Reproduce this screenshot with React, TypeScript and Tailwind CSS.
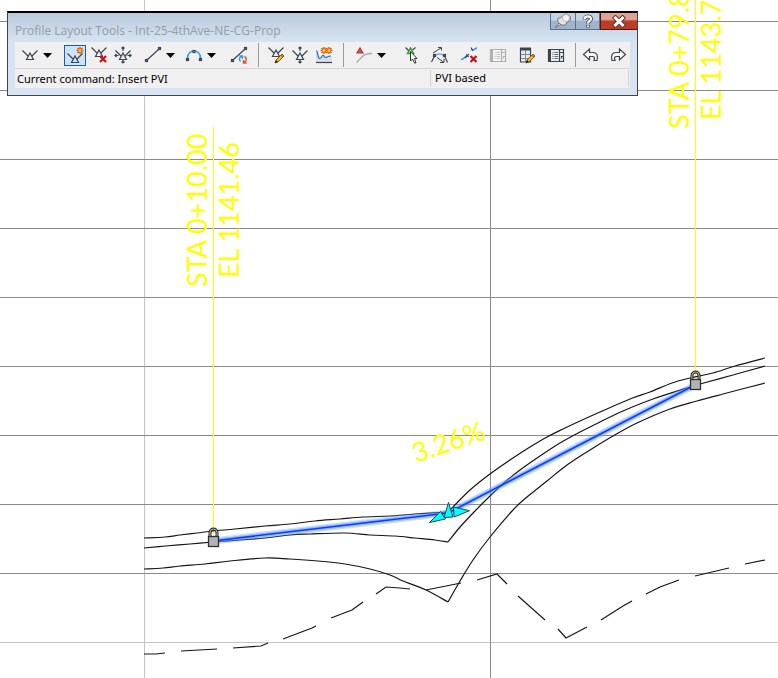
import React from 'react';

type Point = [number, number];

/* ---------- profile drawing ---------- */

const gridRows = [21, 90, 159, 228, 297, 366, 435, 504, 573];

const topLeft: Point[] = [[144, 538], [165, 537], [180, 535], [197, 533], [213, 531], [235, 529], [265, 526], [290, 524], [315, 521], [340, 519], [363, 517], [390, 516], [415, 514], [448, 512]];
const topRight: Point[] = [[448, 512], [454, 506], [470, 490], [490, 474], [513, 458], [530, 447], [547, 437], [563, 429], [580, 421], [600, 412], [630, 399], [650, 392], [672, 383], [690, 378], [713, 373], [735, 366], [765, 358]];
const middleLeft: Point[] = [[144, 548], [165, 546], [190, 544], [213, 542], [240, 540], [265, 538], [290, 535], [310, 534], [345, 533], [370, 535], [395, 536], [415, 538], [435, 540], [448, 542]];
const middleRight: Point[] = [[448, 542], [460, 527], [475, 511], [490, 496], [505, 482], [520, 470], [540, 456], [560, 443], [580, 432], [600, 422], [623, 411], [653, 399], [690, 387], [700, 384], [733, 375], [765, 366]];
const bottomLeft: Point[] = [[144, 569], [163, 568], [180, 566], [205, 564], [230, 561], [265, 558], [290, 559], [318, 561], [345, 564], [370, 569], [390, 575], [403, 581], [426, 590], [448, 602]];
const bottomRight: Point[] = [[448, 602], [460, 581], [473, 560], [490, 537], [513, 510], [527, 497], [547, 481], [567, 465], [590, 450], [613, 436], [637, 423], [670, 409], [697, 401], [723, 394], [765, 383]];

const groundDashes: Point[][] = [
  [[144, 654], [156, 654], [165, 653]],
  [[181, 651], [217, 649]],
  [[233, 648], [261, 646], [268, 643]],
  [[283, 639], [312, 628], [316, 626]],
  [[331, 618], [352, 610], [363, 602]],
  [[376, 594], [386, 587], [400, 588], [410, 589]],
  [[426, 590], [461, 583]],
  [[477, 580], [497, 574], [507, 584]],
  [[518, 596], [545, 620]],
  [[558, 629], [566, 638], [587, 627]],
  [[601, 620], [623, 606], [632, 601]],
  [[646, 594], [660, 587], [679, 580]],
  [[695, 576], [729, 568]],
  [[745, 564], [765, 560]],
];

const toPoints = (list: Point[]) => list.map((p) => p.join(',')).join(' ');

/* Catmull-Rom spline through the surveyed points */
function toSpline(list: Point[]) {
  let d = `M${list[0][0]} ${list[0][1]}`;
  for (let i = 0; i < list.length - 1; i++) {
    const before = list[Math.max(i - 1, 0)];
    const from = list[i];
    const to = list[i + 1];
    const after = list[Math.min(i + 2, list.length - 1)];
    d += `C${from[0] + (to[0] - before[0]) / 6} ${from[1] + (to[1] - before[1]) / 6} ${to[0] - (after[0] - from[0]) / 6} ${to[1] - (after[1] - from[1]) / 6} ${to[0]} ${to[1]}`;
  }
  return d;
}

function Lock({ x, y }: { x: number; y: number }) {
  return (
    <g transform={`translate(${x} ${y})`}>
      <path d="M-3 0V-3.500a3.500 3.500 0 0 1 7 0V0" fill="none" stroke="#2e2e2e" strokeWidth="3" />
      <path d="M-3 0V-3.500a3.500 3.500 0 0 1 7 0V0" fill="none" stroke="#b4b4b4" strokeWidth="1" />
      <rect x="-4.500" y="0.500" width="10" height="10" fill="#b2b2b2" stroke="#2e2e2e" strokeWidth="1.300" />
    </g>
  );
}

function StationLabel({ x, y, text }: { x: number; y: number; text: string }) {
  return (
    <text transform={`translate(${x} ${y}) rotate(-90)`} className="fill-[#ffff00] font-['Lato',sans-serif] text-[27px]">
      {text}
    </text>
  );
}

function ProfileView() {
  return (
    <svg className="block h-screen w-full" role="img" aria-label="Profile view">
      <g shapeRendering="crispEdges">
        <path d="M144.500 0V2000" stroke="#c4c4c4" />
        <line x1="0" x2="100%" y1="642.5" y2="642.5" stroke="#c4c4c4" />
        {gridRows.map((y) => (
          <line key={y} x1="0" x2="100%" y1={y + 0.5} y2={y + 0.5} stroke="#8a8a8a" />
        ))}
        <path d="M490.500 0V2000" stroke="#8a8a8a" />
        <path d="M213.500 127V534M695.500 0V377" stroke="#ffff00" />
      </g>
      <g fill="none" stroke="#161616" strokeWidth="1.200">
        {[topLeft, topRight, middleLeft, middleRight, bottomLeft, bottomRight].map((line, i) => (
          <path key={i} d={toSpline(line)} />
        ))}
        {groundDashes.map((line, i) => (
          <polyline key={i} points={toPoints(line)} />
        ))}
      </g>
      <g fill="none" strokeLinejoin="round">
        <path d="M213 541L448 513L695 385" stroke="#5a94ff" strokeOpacity=".3" strokeWidth="7" />
        <path d="M213 541L448 513L695 385" stroke="#5a94ff" strokeOpacity=".5" strokeWidth="4" />
        <path d="M213 541L448 513L695 385" stroke="#0a3cff" strokeWidth="1.500" />
      </g>
      <g fill="#00ffff" stroke="#1f4a4a" strokeWidth="1">
        <path d="M429.500 522.500L440.500 511.500L445.500 519Z" />
        <path d="M453.500 507L469.500 510.700L454 517Z" />
        <path d="M448.500 502.500L453 517L444 517.500Z" />
      </g>
      <Lock x={213} y={536} />
      <Lock x={695} y={379} />
      <StationLabel x={207} y={287} text="STA 0+10.00" />
      <StationLabel x={239} y={278} text="EL 1141.46" />
      <StationLabel x={689} y={129} text="STA 0+79.83" />
      <StationLabel x={721} y={120} text="EL 1143.74" />
      <text transform="translate(416 463) rotate(-19)" className="fill-[#ffff00] font-['Lato',sans-serif] text-[27px]">3.26%</text>
    </svg>
  );
}

/* ---------- toolbar icons ---------- */

const ink = '#3b444d';

function Glyph({ children }: { children: React.ReactNode }) {
  return (
    <svg width="18" height="18" viewBox="0 0 18 18" fill="none" stroke={ink} strokeWidth="1.200" aria-hidden="true">
      {children}
    </svg>
  );
}

const Tangents = ({ y = 0 }: { y?: number }) => (
  <g transform={`translate(0 ${y})`}>
    <path d="M1.500 4.500L7 10M16.500 4.500L11 10" />
    <path d="M9 7L5.500 13.500H12.500Z" />
  </g>
);

const RedCross = ({ x, y }: { x: number; y: number }) => (
  <path transform={`translate(${x} ${y})`} d="M0 0L6 6M6 0L0 6" stroke="#c80f14" strokeWidth="2.200" />
);

const Spark = ({ x, y }: { x: number; y: number }) => (
  <g transform={`translate(${x} ${y})`}>
    <path d="M0-3.500V3.500M-3.500 0H3.500M-2.500-2.500L2.500 2.500M2.500-2.500L-2.500 2.500" stroke="#e8590c" strokeWidth="1.400" />
    <circle r="1.600" fill="#ffe94d" stroke="#ec7a12" strokeWidth=".8" />
  </g>
);

const Pencil = ({ x, y }: { x: number; y: number }) => (
  <g transform={`translate(${x} ${y})`}>
    <path d="M0 8L1 5L7 -1L9 1L3 7Z" fill="#fbb829" stroke="#7a4b14" strokeWidth=".9" />
    <path d="M0 8L1 5L3 7Z" fill="#222" stroke="none" />
    <path d="M6 0L8 2" stroke="#b5651d" />
  </g>
);

const Node = ({ x, y }: { x: number; y: number }) => (
  <rect x={x} y={y} width="2" height="2" fill="#fff" strokeWidth="1.200" />
);

const Line = () => (
  <>
    <path d="M3 14L14.500 3.500" />
    <Node x={1.5} y={13.5} />
    <Node x={14.5} y={1.5} />
  </>
);

const Panel = ({ tone, fill }: { tone: string; fill: string }) => (
  <g stroke={tone}>
    <path d="M1.500 3.500H16.500V15.500H1.500Z" fill={fill} />
    <path d="M3 3.500V15.500" strokeWidth="2" />
    <path d="M12.500 3.500V15.500M14.500 12.500V10.500H16.500M13 6.500H16" />
    <path d="M5.500 6.500H6.500M7.500 6.500H11M5.500 8.500H6.500M7.500 8.500H11M5.500 10.500H6.500M7.500 10.500H11M5.500 12.500H6.500M7.500 12.500H11" strokeWidth="1" strokeOpacity=".75" />
  </g>
);

const icons = {
  tangents: <Tangents />,
  insertPvi: (
    <>
      <Tangents y={3} />
      <Spark x={14} y={4.5} />
    </>
  ),
  deletePvi: (
    <>
      <Tangents y={-3} />
      <RedCross x={10} y={10} />
    </>
  ),
  movePvi: (
    <>
      <Tangents />
      <path d="M9 1V5M9 14V17M1 9.500H4.500M13.500 9.500H17M7.500 2.500L9 1L10.500 2.500M7.500 15.500L9 17L10.500 15.500M2.500 8L1 9.500L2.500 11M15.500 8L17 9.500L15.500 11" />
    </>
  ),
  line: <Line />,
  curve: (
    <>
      <path d="M2.500 12C3 2.500 15 2.500 15.500 12" stroke="#2a9df0" strokeWidth="1.500" />
      <Node x={1.5} y={12.5} />
      <Node x={14.5} y={12.5} />
      <Node x={8} y={4.5} />
    </>
  ),
  convert: (
    <>
      <Line />
      <path d="M14.500 10.500C17 12 17 15 14 16.500M13.500 14V17H16.500" stroke="#f4511e" strokeWidth="1.500" />
      <path d="M10.500 15.500C8.500 13.500 9.500 10.500 12 10.500M12.500 13V10H9.500" stroke="#2a9df0" strokeWidth="1.500" />
    </>
  ),
  editPvi: (
    <>
      <Tangents y={-3} />
      <Pencil x={8} y={9} />
    </>
  ),
  raisePvi: (
    <>
      <Tangents />
      <path d="M9 1V5M9 14V17M7.500 2.500L9 1L10.500 2.500M7.500 15.500L9 17L10.500 15.500" />
    </>
  ),
  copyProfile: (
    <>
      <path d="M1 5L5 13L8 9L10 12L13 9L17 11V16H1Z" fill="#d8dfe9" stroke="none" />
      <path d="M1.500 4.500C3 7 3 13 5 12.500S7 8.500 8.500 9.500S9.500 12 11 11.500S13 10 16 10" stroke="#2673c9" />
      <path d="M1 16.500H17" />
      <Spark x={9} y={4.5} />
      <Spark x={14} y={4.5} />
    </>
  ),
  pviCurve: (
    <>
      <path d="M1.500 16.500L8 10C10 8 12 7.500 17 7.500" stroke="#a8a8a8" strokeWidth="1.300" />
      <path d="M5 2L8 7H2Z" fill="#c8605c" stroke="#a63a38" />
    </>
  ),
  selectPvi: (
    <>
      <path d="M3.500 1.500L7 5M13.500 1.500L10.500 4" />
      <path d="M8.500 2L5.500 7.500H11.500Z" fill="#dff0dc" stroke="#2e9b2e" strokeWidth="1.500" />
      <path d="M8.500 5.500V15L10.500 13L12.500 17H14L12.500 12.500H15Z" fill="#fff" stroke="#333" strokeWidth="1" />
    </>
  ),
  selectEntity: (
    <>
      <path d="M2 7L10 2M7 1.500H10.500V4.500M6 11.500L12.500 16M9 16.500H13V13" strokeWidth="1" />
      <path d="M0.500 16L3.500 10M13.500 10L16.500 16.500" />
      <path d="M4 9.500C7 7.500 10 7.500 13 9.500" stroke="#68a9ee" strokeWidth="1.400" />
      <Node x={2.5} y={8.5} />
      <Node x={12.5} y={8.5} />
    </>
  ),
  deleteEntity: (
    <>
      <path d="M1 13.500C3 13.500 4 12 6 10.500M11.500 3.500C13 5 14.500 3.500 17 1.500" stroke="#2a9df0" strokeWidth="1.600" />
      <path d="M6 8.500L8.500 11M5 12L9 8" />
      <path d="M11 1.500L13 5" />
      <RedCross x={10.5} y={10} />
    </>
  ),
  panelOff: <Panel tone="#b0b0b0" fill="#f4f4f4" />,
  gridEdit: (
    <>
      <path d="M2.500 2.500H12.500V16H2.500Z" fill="#e9edf2" />
      <path d="M2 3H13" strokeWidth="3" />
      <path d="M2.500 8.500H12.500M2.500 12.500H12.500M7.500 4V16" stroke="#7b8794" strokeWidth="1" />
      <Pencil x={8} y={9} />
    </>
  ),
  panel: <Panel tone="#3b444d" fill="#e9edf2" />,
  undo: <path d="M1.500 8.500L7.500 3V6.500H11C14.500 6.500 16.500 9 15 14.500H12C13 12 12.500 10.500 10.500 10.500H7.500V14Z" fill="#fafafa" />,
  redo: <path d="M16.500 8.500L10.500 3V6.500H7C3.500 6.500 1.500 9 3 14.500H6C5 12 5.500 10.500 7.500 10.500H10.500V14Z" fill="#fafafa" />,
};

type IconName = keyof typeof icons;

function Tool({ icon, label, active, menu, disabled }: { icon: IconName; label: string; active?: boolean; menu?: boolean; disabled?: boolean }) {
  return (
    <button
      type="button"
      aria-label={label}
      aria-pressed={active}
      disabled={disabled}
      className={`flex h-[21px] shrink-0 items-center ${menu ? 'w-9 justify-between pl-0.5 pr-[3px]' : 'w-[22px] justify-center'} ${active ? 'border border-[#1c5f9f] bg-[#cce4f7]' : ''}`}
    >
      <Glyph>{icons[icon]}</Glyph>
      {menu && (
        <svg width="9" height="5" viewBox="0 0 9 5" aria-hidden="true">
          <path d="M0 0H9L4.500 5Z" fill="#000" />
        </svg>
      )}
    </button>
  );
}

const Separator = () => <span className="ml-2 h-6 w-px shrink-0 bg-[#9a9a9a]" />;

/* ---------- floating toolbar window ---------- */

function LayoutToolsWindow() {
  return (
    <section className="absolute left-[7px] top-[11px] w-[631px] border border-t-2 border-[#3f444b] border-t-black bg-[#d7e3f1] pb-[7px] pl-[7px] pr-[7px] font-['Noto_Sans','Open_Sans',sans-serif]">
      <header className="-ml-[7px] -mr-[7px] flex h-[29px] items-start justify-between bg-linear-to-b from-[#b9cbdd] to-[#d7e3f1] pl-[7px]">
        <h1 className="pt-[10px] font-['Open_Sans',sans-serif] text-[12px] leading-4 text-[#959ca4]">Profile Layout Tools - Int-25-4thAve-NE-CG-Prop</h1>
        <div className="flex h-[17px]">
          <button type="button" aria-label="Pin" className="flex w-[26px] items-center justify-center border border-t-0 border-[#5d7187] bg-linear-to-b from-[#c3d3e4] from-45% to-[#9db4cc] to-50%">
            <svg width="18" height="16" viewBox="0 0 18 16" className="shrink-0" aria-hidden="true">
              <path d="M1.500 14.500L5.500 9L7.500 11Z" fill="#eee" stroke="#6b747e" />
              <path d="M4 5.500C2.500 9 7.500 14 12 11.500L12.500 9.500L16 7.500C18 3.500 14 0 10 1.500L7 4.500Z" fill="#e6e6e6" stroke="#6b747e" />
              <circle cx="12" cy="5" r="3.500" fill="#fbfbfb" stroke="#b2b6ba" />
            </svg>
          </button>
          <button type="button" aria-label="Help" className="flex w-6 items-center justify-center border-b border-r border-[#5d7187] bg-linear-to-b from-[#c3d3e4] from-45% to-[#9db4cc] to-50%">
            <svg width="14" height="15" viewBox="0 0 14 15" fill="none" aria-hidden="true">
              <path d="M3.500 5.500C3.500 1.500 10.500 1.500 10 5C10 7 7 7 7 9.500M7 11V13.500" stroke="#47515e" strokeWidth="4" />
              <path d="M3.500 5C3.500 1.500 10.500 1.500 10 5C10 7 7 7 7 9.500M7 11.500V13" stroke="#fff" strokeWidth="2.200" />
            </svg>
          </button>
          <button type="button" aria-label="Close" className="flex w-[37px] items-center justify-center border-b border-l border-[#4b1812] bg-linear-to-b from-[#e0a294] from-40% to-[#bd3c24] to-50%">
            <svg width="16" height="13" viewBox="0 0 16 13" fill="none" strokeLinecap="square" aria-hidden="true">
              <path d="M4.500 3L11.500 10M11.500 3L4.500 10" stroke="#5b3a3a" strokeWidth="5" />
              <path d="M4.500 3L11.500 10M11.500 3L4.500 10" stroke="#fff" strokeWidth="3" />
            </svg>
          </button>
        </div>
      </header>
      <div className="bg-[#f0f0f0]">
        <div role="toolbar" aria-label="Profile layout" className="flex h-[27px] items-center border-b border-[#d5d5d5] pl-1">
          <Tool icon="tangents" label="Draw tangents" menu />
          <div className="ml-[9px] flex gap-0.5">
            <Tool icon="insertPvi" label="Insert PVI" active />
            <Tool icon="deletePvi" label="Delete PVI" />
            <Tool icon="movePvi" label="Move PVI" />
          </div>
          <div className="ml-2 flex gap-[5px]">
            <Tool icon="line" label="Fixed tangent" menu />
            <Tool icon="curve" label="Vertical curve" menu />
          </div>
          <div className="ml-[9px] flex">
            <Tool icon="convert" label="Convert line and spline" />
          </div>
          <Separator />
          <div className="ml-1.5 flex gap-0.5">
            <Tool icon="editPvi" label="Insert PVIs tabular" />
            <Tool icon="raisePvi" label="Raise or lower PVIs" />
            <Tool icon="copyProfile" label="Copy profile" />
          </div>
          <Separator />
          <div className="ml-[9px] flex">
            <Tool icon="pviCurve" label="PVI based" menu />
          </div>
          <div className="ml-[11px] flex gap-[7px]">
            <Tool icon="selectPvi" label="Select PVI" />
            <Tool icon="selectEntity" label="Select entity" />
            <Tool icon="deleteEntity" label="Delete entity" />
            <Tool icon="panelOff" label="Layout parameters" disabled />
            <Tool icon="gridEdit" label="Edit design criteria" />
            <Tool icon="panel" label="Profile grid view" />
          </div>
          <Separator />
          <div className="ml-1 flex gap-[5px]">
            <Tool icon="undo" label="Undo" />
            <Tool icon="redo" label="Redo" />
          </div>
        </div>
        <div role="status" className="flex h-[19px] items-center pr-px text-[11px] leading-4 text-black">
          <span className="flex-1 pl-0.5">Current command: Insert PVI</span>
          <span className="h-[17px] w-[199px] border-x border-[#d2d2d2] pl-1">PVI based</span>
        </div>
      </div>
    </section>
  );
}

export default function App() {
  return (
    <main className="relative min-h-screen overflow-hidden bg-white">
      <ProfileView />
      <LayoutToolsWindow />
    </main>
  );
}
